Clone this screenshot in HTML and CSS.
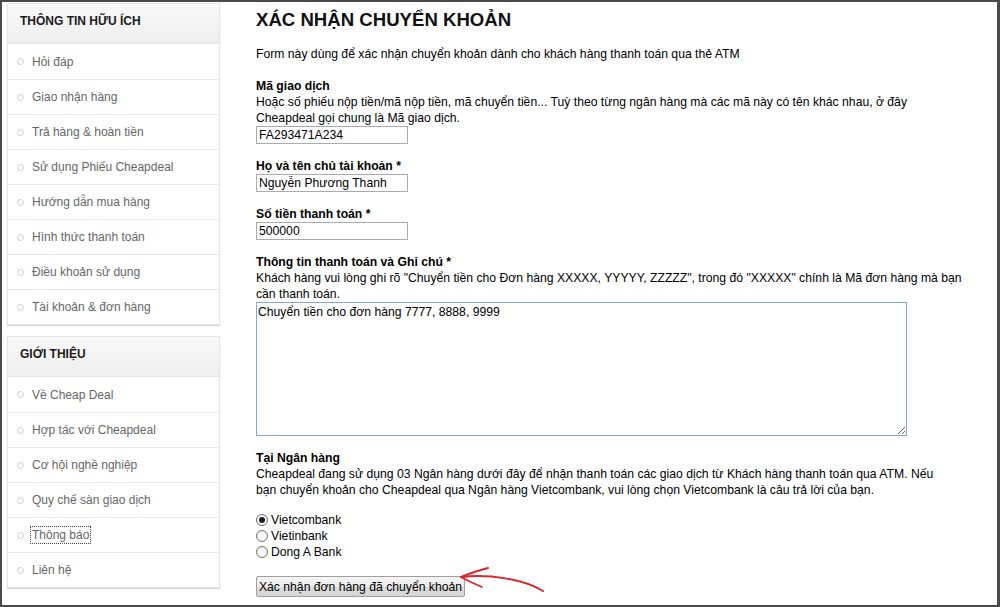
FILE: index.html
```html
<!DOCTYPE html>
<html lang="vi">
<head>
<meta charset="utf-8">
<title>Xác nhận chuyển khoản</title>
<link rel="stylesheet" href="styles.css">
</head>
<body>
<div class="frame">
  <aside class="sidebar">
    <section class="box">
      <h3 class="box-title">THÔNG TIN HỮU ÍCH</h3>
      <ul class="menu">
        <li><a href="#">Hỏi đáp</a></li>
        <li><a href="#">Giao nhận hàng</a></li>
        <li><a href="#">Trả hàng &amp; hoàn tiền</a></li>
        <li><a href="#">Sử dụng Phiếu Cheapdeal</a></li>
        <li><a href="#">Hướng dẫn mua hàng</a></li>
        <li><a href="#">Hình thức thanh toán</a></li>
        <li><a href="#">Điều khoản sử dụng</a></li>
        <li><a href="#">Tài khoản &amp; đơn hàng</a></li>
      </ul>
    </section>
    <section class="box">
      <h3 class="box-title">GIỚI THIỆU</h3>
      <ul class="menu">
        <li><a href="#">Về Cheap Deal</a></li>
        <li><a href="#">Hợp tác với Cheapdeal</a></li>
        <li><a href="#">Cơ hội nghề nghiệp</a></li>
        <li><a href="#">Quy chế sàn giao dịch</a></li>
        <li><a href="#" class="focused">Thông báo</a></li>
        <li><a href="#">Liên hệ</a></li>
      </ul>
    </section>
  </aside>

  <main class="content">
    <h1 class="title">XÁC NHẬN CHUYỂN KHOẢN</h1>
    <p class="intro">Form này dùng để xác nhận chuyển khoản dành cho khách hàng thanh toán qua thẻ ATM</p>

    <div class="field">
      <label class="label" for="ma">Mã giao dịch</label>
      <div class="desc">Hoặc số phiếu nộp tiền/mã nộp tiền, mã chuyển tiền... Tuỳ theo từng ngân hàng mà các mã này có tên khác nhau, ở đây<br>Cheapdeal gọi chung là Mã giao dịch.</div>
      <input class="input" id="ma" type="text" value="FA293471A234">
    </div>

    <div class="field">
      <label class="label" for="ten">Họ và tên chủ tài khoản *</label>
      <input class="input" id="ten" type="text" value="Nguyễn Phương Thanh">
    </div>

    <div class="field">
      <label class="label" for="tien">Số tiền thanh toán *</label>
      <input class="input" id="tien" type="text" value="500000">
    </div>

    <div class="field">
      <label class="label" for="ghichu">Thông tin thanh toán và Ghi chú *</label>
      <div class="desc">Khách hàng vui lòng ghi rõ "Chuyển tiền cho Đơn hàng XXXXX, YYYYY, ZZZZZ", trong đó "XXXXX" chính là Mã đơn hàng mà bạn<br>cần thanh toán.</div>
      <textarea class="textarea" id="ghichu" spellcheck="false">Chuyển tiền cho đơn hàng 7777, 8888, 9999</textarea>
    </div>

    <div class="field">
      <span class="label">Tại Ngân hàng</span>
      <div class="desc">Cheapdeal đang sử dụng 03 Ngân hàng dưới đây để nhận thanh toán các giao dịch từ Khách hàng thanh toán qua ATM. Nếu<br>bạn chuyển khoản cho Cheapdeal qua Ngân hàng Vietcombank, vui lòng chọn Vietcombank là câu trả lời của bạn.</div>
      <div class="radios">
        <label class="radio"><input type="radio" name="bank" checked><span>Vietcombank</span></label>
        <label class="radio"><input type="radio" name="bank"><span>Vietinbank</span></label>
        <label class="radio"><input type="radio" name="bank"><span>Dong A Bank</span></label>
      </div>
    </div>

    <button class="submit" type="button">Xác nhận đơn hàng đã chuyển khoản</button>
  </main>

  <svg class="arrow" width="100" height="36" viewBox="0 0 100 36" aria-hidden="true">
    <path d="M6 15 C 35 12, 68 17, 88 29" fill="none" stroke="#d8262c" stroke-width="2" stroke-linecap="round"/>
    <path d="M6 15 C 16 11, 25 8, 33 6" fill="none" stroke="#d8262c" stroke-width="2" stroke-linecap="round"/>
    <path d="M6 15 C 13 19, 20 22, 27 25" fill="none" stroke="#d8262c" stroke-width="1.6" stroke-linecap="round"/>
  </svg>
</div>
</body>
</html>
```

FILE: styles.css
```css
html, body {
  margin: 0;
  padding: 0;
  background: #fff;
}

body {
  font-family: "Liberation Sans", Arial, sans-serif;
}

.frame {
  position: relative;
  width: 1000px;
  height: 607px;
  box-sizing: border-box;
  border: 2px solid #4a4a4a;
  border-right-width: 3px;
  padding: 1px 0 0 5px;
  display: flex;
  gap: 36px;
  overflow: hidden;
  background: #fff;
}

/* Sidebar */
.sidebar {
  width: 213px;
  flex: none;
}

.box {
  border: 1px solid #e4e4e4;
  background: #fff;
  box-shadow: 0 1px 1px #d6d6d6;
  margin-bottom: 11px;
}

.box-title {
  margin: 0;
  height: 40px;
  box-sizing: border-box;
  padding: 9px 12px 0;
  font-size: 12px;
  line-height: 16px;
  font-weight: bold;
  color: #1b1b1b;
  background: linear-gradient(#f9f9f9, #eeeeee);
  border-bottom: 1px solid #e6e6e6;
}

.menu {
  list-style: none;
  margin: 0;
  padding: 0;
}

.menu li {
  height: 35px;
  box-sizing: border-box;
  display: flex;
  align-items: center;
  padding-left: 9px;
  font-size: 12px;
}

.menu li + li {
  border-top: 1px solid #e8e8e8;
}

.menu li::before {
  content: "";
  width: 5px;
  height: 5px;
  border: 1px solid #cdcdcd;
  border-radius: 50%;
  margin-right: 8px;
  flex: none;
}

.menu a {
  color: #666;
  text-decoration: none;
}

.menu a.focused {
  outline: 1px dotted #444;
  outline-offset: 1px;
}

/* Main content */
.content {
  width: 720px;
  flex: none;
  font-size: 12.2px;
  line-height: 16px;
  color: #000;
}

.title {
  margin: 6px 0 15px;
  font-size: 18.6px;
  line-height: 22px;
  font-weight: bold;
  color: #111;
}

.intro {
  margin: 0 0 16px;
}

.field {
  margin-bottom: 14px;
}

.label {
  display: block;
  font-weight: bold;
}

.desc {
  display: block;
}

.input {
  display: block;
  width: 152px;
  height: 18px;
  box-sizing: border-box;
  margin: 0;
  padding: 0 2px;
  border: 1px solid #a9abae;
  font-family: "Liberation Sans", Arial, sans-serif;
  font-size: 12.2px;
  color: #000;
  background: #fff;
}

.textarea {
  display: block;
  width: 651px;
  height: 134px;
  box-sizing: border-box;
  margin: 0;
  padding: 1px 1px;
  border: 1px solid #82a9d3;
  font-family: "Liberation Sans", Arial, sans-serif;
  font-size: 12.2px;
  line-height: 16px;
  color: #000;
  resize: both;
  outline: none;
}

.radios {
  margin-top: 14px;
}

.radio {
  display: flex;
  align-items: center;
  height: 16px;
  gap: 3px;
}

.radio input {
  appearance: none;
  -webkit-appearance: none;
  width: 12px;
  height: 12px;
  margin: 0;
  border: 1px solid #707070;
  border-radius: 50%;
  background: radial-gradient(circle, #ffffff 0%, #ececec 100%);
  display: grid;
  place-items: center;
  flex: none;
}

.radio input:checked::after {
  content: "";
  width: 6px;
  height: 6px;
  border-radius: 50%;
  background: #1e1e1e;
}

.submit {
  display: block;
  margin-top: 16px;
  width: 209px;
  height: 21px;
  padding: 0;
  border: 1px solid #9f9f9f;
  border-radius: 2px;
  background: linear-gradient(#f4f4f4 0%, #ececec 50%, #dcdcdc 51%, #d6d6d6 100%);
  font-family: "Liberation Sans", Arial, sans-serif;
  font-size: 12.2px;
  color: #000;
}

.arrow {
  position: absolute;
  left: 453px;
  top: 560px;
}
```
